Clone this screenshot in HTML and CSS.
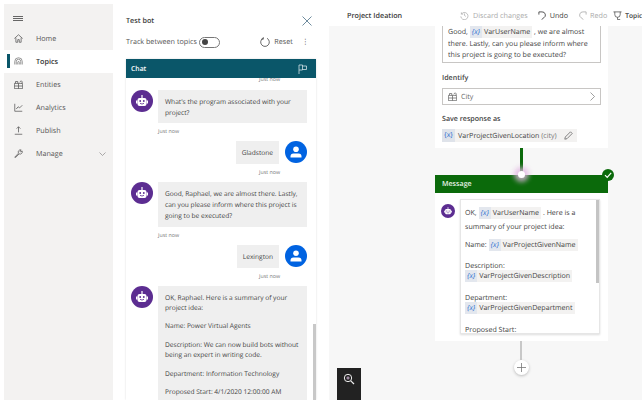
FILE: index.html
```html
<!DOCTYPE html>
<html lang="en">
<head>
    <meta charset="UTF-8">
    <meta name="viewport" content="width=device-width, initial-scale=1.0">
    <title>Project Ideation</title>
    <link rel="stylesheet" href="styles.css">
</head>
<body>
    <svg class="defs" width="0" height="0">
        <symbol id="robot" viewBox="0 0 22 22">
            <circle cx="11" cy="11" r="11" fill="#5c2d91"/>
            <rect x="6.500" y="8" width="9" height="8" rx="2" fill="#fff"/>
            <rect x="5" y="10.500" width="1.500" height="3" fill="#fff"/>
            <rect x="15.500" y="10.500" width="1.500" height="3" fill="#fff"/>
            <rect x="10.400" y="5" width="1.200" height="3" fill="#fff"/>
            <circle cx="9.200" cy="11" r=".9" fill="#5c2d91"/>
            <circle cx="12.800" cy="11" r=".9" fill="#5c2d91"/>
            <path d="M9 13.300 Q11 14.800 13 13.300" fill="none" stroke="#5c2d91" stroke-width=".8"/>
        </symbol>
        <symbol id="user" viewBox="0 0 22 22">
            <circle cx="11" cy="11" r="11" fill="#0063e1"/>
            <circle cx="11" cy="8.300" r="2.800" fill="#fff"/>
            <path d="M5.500 16.500 v-1 q0 -3 3 -3 h5 q3 0 3 3 v1 z" fill="#fff"/>
        </symbol>
    </svg>

    <div class="app">
        <nav class="sidebar">
            <div class="burger">
                <svg width="10" height="5" viewBox="0 0 10 5"><path d="M0 .5h10M0 2.500h10M0 4.500h10" stroke="#666"/></svg>
            </div>
            <a class="nav-item">
                <svg width="9" height="9" viewBox="0 0 12 12"><path d="M.5 6 6 1l5.500 5M2.500 5v6h2.500V7.500h2V11h2.500V5" fill="none" stroke="#555"/></svg>
                <span>Home</span>
            </a>
            <a class="nav-item active">
                <svg width="9" height="9" viewBox="0 0 12 12"><path d="M1 10V6a5 5 0 0 1 10 0v4M3 10V6a3 3 0 0 1 6 0v4M5 10V7a1 1 0 0 1 2 0v3" fill="none" stroke="#777"/></svg>
                <span>Topics</span>
            </a>
            <a class="nav-item">
                <svg width="9" height="9" viewBox="0 0 12 12"><path d="M.5 4.500h11v7H.5zM.5 8h11M6 4.500v7M2 4.500V2h3v2.500M7.500 3 9.500 1l2 2-2 1.500" fill="none" stroke="#555"/></svg>
                <span>Entities</span>
            </a>
            <a class="nav-item">
                <svg width="9" height="9" viewBox="0 0 12 12"><path d="M1 1v10h10M3 8l2.500-3 2 1.500L11 3" fill="none" stroke="#555"/></svg>
                <span>Analytics</span>
            </a>
            <a class="nav-item">
                <svg width="9" height="9" viewBox="0 0 12 12"><path d="M6 8.500V1M3.500 3.500 6 1l2.500 2.500M1 11h10" fill="none" stroke="#555"/></svg>
                <span>Publish</span>
            </a>
            <a class="nav-item">
                <svg width="9" height="9" viewBox="0 0 12 12"><path d="M1 11 6 5.500a3 3 0 0 1 3.500-4.300L8 3l1 1 1.800-1.500A3 3 0 0 1 6.800 6.500L2 11.500z" fill="none" stroke="#555"/></svg>
                <span>Manage</span>
                <svg class="chevron" width="7" height="4" viewBox="0 0 7 4"><path d="M.5.500l3 3 3-3" fill="none" stroke="#888" stroke-width=".7"/></svg>
            </a>
        </nav>

        <section class="test-panel">
            <div class="panel-title">
                <strong>Test bot</strong>
                <svg width="10" height="10" viewBox="0 0 10 10"><path d="M.5.500l9 9M9.500.500l-9 9" stroke="#4a6f85" stroke-width=".8"/></svg>
            </div>
            <div class="panel-tools">
                <span>Track between topics</span>
                <span class="toggle"><i></i></span>
                <span class="reset">
                    <svg width="10" height="10" viewBox="0 0 10 10"><path d="M3 1.300a4.300 4.300 0 1 0 4 0M3.300 .2v2H1.300" fill="none" stroke="#444" stroke-width=".8"/></svg>
                    Reset
                </span>
                <span class="more">&#8942;</span>
            </div>
            <div class="chat">
                <div class="chat-head">
                    <span>Chat</span>
                    <svg width="9" height="10" viewBox="0 0 9 10"><path d="M1 10V1h3.500v5H1M4.500 2h4v3.500h-4" fill="none" stroke="#cfe0e5" stroke-width=".8"/></svg>
                </div>
                <div class="chat-body">
                    <div class="time right first">Just now</div>
                    <div class="msg">
                        <svg class="avatar"><use href="#robot"/></svg>
                        <div class="bubble">What's the program associated with your project?</div>
                    </div>
                    <div class="time">Just now</div>
                    <div class="msg mine">
                        <div class="bubble">Gladstone</div>
                        <svg class="avatar"><use href="#user"/></svg>
                    </div>
                    <div class="time right">Just now</div>
                    <div class="msg">
                        <svg class="avatar"><use href="#robot"/></svg>
                        <div class="bubble">Good, Raphael, we are almost there. Lastly, can you please inform where this project is going to be executed?</div>
                    </div>
                    <div class="time">Just now</div>
                    <div class="msg mine">
                        <div class="bubble">Lexington</div>
                        <svg class="avatar"><use href="#user"/></svg>
                    </div>
                    <div class="time right">Just now</div>
                    <div class="msg">
                        <svg class="avatar"><use href="#robot"/></svg>
                        <div class="bubble">
                            <p>OK, Raphael. Here is a summary of your project idea:</p>
                            <p>Name: Power Virtual Agents</p>
                            <p>Description: We can now build bots without being an expert in writing code.</p>
                            <p>Department: Information Technology</p>
                            <p>Proposed Start: 4/1/2020 12:00:00 AM</p>
                        </div>
                    </div>
                    <div class="chat-scroll"></div>
                </div>
            </div>
        </section>

        <main class="editor">
            <header class="editor-head">
                <strong>Project Ideation</strong>
                <div class="actions">
                    <span class="off">
                        <svg width="9" height="9" viewBox="0 0 10 10"><path d="M1.500 1.500v2h2M1.500 3.500a4 4 0 1 1-.6 2.500M5 2.800V5l1.500 1" fill="none" stroke="#aaa" stroke-width=".8"/></svg>
                        Discard changes
                    </span>
                    <span>
                        <svg width="9" height="9" viewBox="0 0 10 10"><path d="M1 1h3.500a3.500 3.500 0 0 1 2 6.500L4 9.500M1 1v3" fill="none" stroke="#333" stroke-width=".9"/></svg>
                        Undo
                    </span>
                    <span class="off">
                        <svg width="9" height="9" viewBox="0 0 10 10"><path d="M9 1H5.500a3.500 3.500 0 0 0-2 6.500L6 9.500M9 1v3" fill="none" stroke="#aaa" stroke-width=".9"/></svg>
                        Redo
                    </span>
                    <span class="topic">
                        <svg width="9" height="9" viewBox="0 0 10 10"><path d="M.5 1h9M2 1v3a3 3 0 0 0 6 0V1M5 7v2.500h3" fill="none" stroke="#444" stroke-width=".8"/></svg>
                        Topic
                    </span>
                </div>
            </header>
            <div class="canvas">
                <div class="node question">
                    <div class="prompt">
                        <div class="prompt-line">Good, <span class="var"><b>{x}</b> VarUserName</span> , we are almost</div>
                        <div>there. Lastly, can you please inform where</div>
                        <div>this project is going to be executed?</div>
                    </div>
                    <div class="label">Identify</div>
                    <div class="select">
                        <svg width="9" height="9" viewBox="0 0 12 12"><path d="M.5 4.500h11v7H.5zM.5 8h11M6 4.500v7M2 4.500V2h3v2.500M7.500 3 9.500 1l2 2-2 1.500" fill="none" stroke="#666"/></svg>
                        <span>City</span>
                        <svg class="select-arrow" width="5" height="9" viewBox="0 0 5 9"><path d="M.5.500l4 4-4 4" fill="none" stroke="#777" stroke-width=".7"/></svg>
                    </div>
                    <div class="label save">Save response as</div>
                    <div class="save-chip">
                        <b>{x}</b>
                        <span>VarProjectGivenLocation <em>(city)</em></span>
                        <svg width="9" height="9" viewBox="0 0 9 9"><path d="M.8 8.200 1.300 6 6.500.8l1.700 1.700L3 7.700z" fill="none" stroke="#666" stroke-width=".8"/></svg>
                    </div>
                </div>
                <div class="link green"></div>
                <div class="node message">
                    <span class="dot"></span>
                    <span class="check">
                        <svg width="12" height="12" viewBox="0 0 12 12"><circle cx="6" cy="6" r="6" fill="#0b6a0b"/><path d="M3 6.200 5.200 8.400 9.200 3.800" fill="none" stroke="#fff" stroke-width="1.200"/></svg>
                    </span>
                    <div class="message-head">Message</div>
                    <div class="message-body">
                        <svg class="mini-avatar"><use href="#robot"/></svg>
                        <div class="message-box">
                            <i class="box-scroll"></i>
                            <p class="tall">OK, <span class="var"><b>{x}</b> VarUserName</span> . Here is a<br>summary of your project idea:</p>
                            <p>Name: <span class="var"><b>{x}</b> VarProjectGivenName</span></p>
                            <p>Description:<br><span class="var"><b>{x}</b> VarProjectGivenDescription</span></p>
                            <p>Department:<br><span class="var"><b>{x}</b> VarProjectGivenDepartment</span></p>
                            <p>Proposed Start:</p>
                        </div>
                    </div>
                </div>
                <div class="link grey"></div>
                <div class="add">
                    <svg width="9" height="9" viewBox="0 0 9 9"><path d="M4.500 0v9M0 4.500h9" stroke="#777" stroke-width=".8"/></svg>
                </div>
                <div class="zoom">
                    <svg width="12" height="12" viewBox="0 0 12 12"><circle cx="5" cy="5" r="3.700" fill="none" stroke="#eee"/><path d="M7.800 7.800 11 11" stroke="#eee" stroke-width="1.200"/><path d="M3.300 5h3.400M5 3.300v3.400" stroke="#e9c8ee" stroke-width=".8"/></svg>
                </div>
            </div>
        </main>
    </div>
</body>
</html>
```

FILE: styles.css
```css
html, body {
    margin: 0;
    height: 100%;
    overflow: hidden;
}
body {
    background: #fff;
    font-family: "Open Sans", "Liberation Sans", sans-serif;
    font-size: 7.500px;
    color: #3b3a39;
    text-rendering: geometricPrecision;
}
.defs {
    position: absolute;
}
.app {
    display: flex;
    height: 396px;
    margin: 4px 0 0 4px;
}

/* left nav */
.sidebar {
    width: 109px;
    flex: none;
    background: #f3f2f1;
}
.burger {
    height: 23px;
    padding-left: 9px;
    padding-top: 12px;
    box-sizing: border-box;
}
.burger svg {
    display: block;
}
.nav-item {
    display: flex;
    align-items: center;
    height: 23px;
    padding-left: 10px;
    gap: 13px;
    font-size: 7.200px;
    position: relative;
    color: #555;
}
.nav-item span {
    padding-top: 1px;
}
.nav-item.active {
    background: #fff;
    font-weight: 600;
    color: #333;
}
.nav-item.active::before {
    content: "";
    position: absolute;
    left: 3px;
    top: 4px;
    width: 2.500px;
    height: 14px;
    background: #0a5669;
}
.chevron {
    margin-left: auto;
    margin-right: 7px;
}

/* test bot */
.test-panel {
    width: 216px;
    flex: none;
    display: flex;
    flex-direction: column;
    padding: 0 13px;
    box-sizing: border-box;
    background: #fff;
}
.panel-title {
    display: flex;
    justify-content: space-between;
    align-items: center;
    height: 12px;
    margin-top: 11px;
    padding-right: 4px;
    font-size: 7.200px;
}
.panel-title strong {
    font-weight: 600;
}
.panel-tools {
    display: flex;
    align-items: center;
    height: 12px;
    margin-top: 9px;
    font-size: 7.200px;
    color: #555;
}
.toggle {
    width: 21px;
    height: 11px;
    margin-left: 2px;
    border: 1px solid #777;
    border-radius: 6px;
    box-sizing: border-box;
    display: flex;
    align-items: center;
    padding-left: 2px;
}
.toggle i {
    width: 6px;
    height: 6px;
    border-radius: 50%;
    background: #444;
}
.reset {
    display: flex;
    align-items: center;
    gap: 4px;
    margin-left: auto;
}
.more {
    margin-left: 9px;
    margin-right: 7px;
}
.chat {
    flex: 1;
    margin-top: 11px;
    display: flex;
    flex-direction: column;
    min-height: 0;
    box-shadow: 0 0 2px #ddd;
}
.chat-head {
    height: 19px;
    flex: none;
    background: #0a5669;
    color: #fff;
    font-size: 6.800px;
    font-weight: 600;
    display: flex;
    align-items: center;
    justify-content: space-between;
    padding: 0 9px 0 5px;
}
.chat-body {
    flex: 1;
    position: relative;
    overflow: hidden;
    padding: 0 9px 0 5px;
    display: flex;
    flex-direction: column;
    font-size: 6.600px;
}
.time {
    font-size: 5.300px;
    line-height: 8px;
    color: #777;
    padding-left: 27px;
    margin: 4px 0 6px;
}
.time.right {
    text-align: right;
    padding-right: 27px;
}
.time.first {
    margin: -3px 0 7px;
}
.msg {
    display: flex;
    gap: 5px;
    flex: none;
}
.msg.mine {
    justify-content: flex-end;
    gap: 6px;
}
.avatar {
    width: 22px;
    height: 22px;
    flex: none;
}
.bubble {
    flex: 1;
    background: #efefef;
    padding: 7px 7px 5px;
    line-height: 10.700px;
    color: #444;
}
.mine .bubble {
    flex: none;
    padding: 7px 6px 5px;
    height: 11px;
}
.bubble p {
    margin: 0 0 7.500px;
}
.chat-scroll {
    position: absolute;
    right: 0;
    top: 246px;
    bottom: 0;
    width: 3px;
    background: #c8c8c8;
}

/* editor */
.editor {
    flex: 1;
    min-width: 0;
    display: flex;
    flex-direction: column;
    background: #f7f7f7;
}
.editor-head {
    height: 22px;
    flex: none;
    background: #fff;
    display: flex;
    align-items: center;
    padding: 1px 0 0 18px;
    box-sizing: border-box;
    overflow: hidden;
    font-size: 7.200px;
}
.editor-head strong {
    font-weight: 600;
    flex: none;
    width: 54px;
    white-space: nowrap;
}
.actions {
    margin-left: 59px;
    flex: none;
    display: flex;
    gap: 10px;
    white-space: nowrap;
}
.actions span {
    display: flex;
    align-items: center;
    gap: 3px;
}
.actions .off:first-child {
    gap: 4px;
}
.actions .off {
    color: #aaa;
}
.actions .topic {
    margin-left: -4px;
    font-size: 6.600px;
    font-weight: 600;
}
.canvas {
    flex: 1;
    position: relative;
    display: flex;
    flex-direction: column;
    align-items: flex-start;
    padding-left: 106px;
    font-size: 7.100px;
    color: #444;
}
.node {
    width: 173px;
    background: #fff;
    box-sizing: border-box;
    position: relative;
}
.question {
    height: 122px;
    padding: 0 7px;
}
.prompt {
    height: 37px;
    border: 1px solid #c8c6c4;
    border-top: none;
    padding: 0 5px;
    box-sizing: border-box;
    line-height: 10.700px;
}
.prompt-line {
    line-height: 13px;
}
.var {
    background: #f3f2f1;
    padding: 1px 2px 1px 0;
    white-space: nowrap;
}
.var b {
    background: #e3e7ee;
    color: #2b6fd0;
    font-weight: 400;
    padding: 1px 2px;
    font-style: italic;
}
.label {
    font-weight: 600;
    margin-top: 9px;
    padding-top: 1px;
    line-height: 11px;
}
.save {
    margin-top: 8px;
}
.select {
    display: flex;
    align-items: center;
    gap: 4px;
    height: 17px;
    margin-top: 4px;
    border: 1px solid #c8c6c4;
    padding: 0 5px;
    box-sizing: border-box;
    color: #666;
}
.select-arrow {
    margin-left: auto;
}
.save-chip {
    display: flex;
    align-items: center;
    width: 135px;
    height: 13px;
    margin-top: 4px;
    background: #f3f2f1;
    white-space: nowrap;
}
.save-chip b {
    background: #dfe3ea;
    color: #2b6fd0;
    font-weight: 400;
    height: 13px;
    line-height: 13px;
    padding: 0 2px;
    margin-right: 3px;
}
.save-chip em {
    font-style: normal;
    color: #777;
}
.save-chip svg {
    margin-left: auto;
    margin-right: 4px;
}
.link {
    width: 3px;
    margin-left: 84.500px;
    flex: none;
}
.link.green {
    height: 27px;
    background: #0b6a0b;
}
.link.grey {
    height: 19px;
    width: 2px;
    margin-left: 85px;
    background: #c8c8c8;
}
.message {
    height: 166px;
}
.message-head {
    height: 18px;
    background: #0b6a0b;
    color: #e8f3e8;
    font-weight: 600;
    line-height: 18px;
    padding-left: 7px;
}
.dot {
    position: absolute;
    left: 80px;
    top: -7px;
    width: 7px;
    height: 7px;
    margin: 3px;
    border-radius: 50%;
    background: #fff;
    box-shadow: 0 0 5px 4px rgba(225, 180, 225, .8);
}
.check {
    position: absolute;
    right: -6px;
    top: -6px;
    width: 12px;
    height: 12px;
    z-index: 1;
}
.check svg {
    display: block;
}
.message-body {
    display: flex;
    padding: 6px 8px 0 6px;
    gap: 5px;
}
.mini-avatar {
    width: 14px;
    height: 14px;
    flex: none;
    margin-top: 5px;
}
.message-box {
    position: relative;
    flex: 1;
    height: 135px;
    overflow: hidden;
    border: 1px solid #e6e6e6;
    box-sizing: border-box;
    padding: 6px 4px 4px;
    box-shadow: 0 1px 2px #ddd;
    line-height: 10.700px;
}
.message-box p {
    margin: 0 0 10.500px;
    white-space: nowrap;
}
.message-box .tall {
    line-height: 14px;
    margin-bottom: 5.500px;
}
.box-scroll {
    position: absolute;
    right: 0;
    top: 0;
    width: 3px;
    height: 83px;
    background: #c4c4c4;
}
.add {
    width: 15px;
    height: 15px;
    margin-left: 78.500px;
    border-radius: 50%;
    background: #fff;
    box-shadow: 0 1px 3px #bbb;
    display: flex;
    align-items: center;
    justify-content: center;
    flex: none;
}
.zoom {
    position: absolute;
    left: 8px;
    bottom: 0;
    width: 24px;
    height: 32px;
    background: #222;
    box-sizing: border-box;
    padding: 5px 6px;
}
```
